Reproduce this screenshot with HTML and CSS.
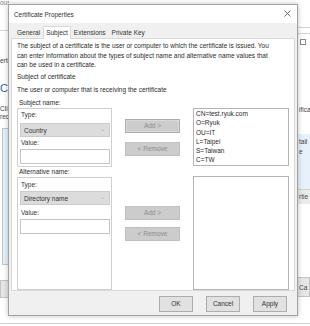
FILE: index.html
```html
<!DOCTYPE html>
<html lang="en">
<head>
    <meta charset="UTF-8">
    <title>Certificate Properties</title>
    <link rel="stylesheet" href="styles.css">
</head>
<body>
    <div class="desk">
        <div class="back">
            <div class="back_row">
                <div class="strip strip_left">
                    <span class="bt bt_ous">ous</span>
                    <div class="bline bline_a"></div>
                    <span class="bt bt_ertif">ertif</span>
                    <span class="bt_head">Ce</span>
                    <span class="bt bt_cli">Cli</span>
                    <span class="bt">rec</span>
                    <div class="blist"></div>
                    <div class="bbtn"></div>
                </div>
                <div class="strip strip_right">
                    <div class="bline bline_r1"></div>
                    <div class="bline bline_r2"></div>
                    <div class="bcheck"></div>
                    <span class="bt bt_ificat">ificat</span>
                    <div class="bsel">
                        <span class="bt">tail</span>
                        <span class="bt">e</span>
                    </div>
                    <div class="bbar"><span class="bt">rtie</span></div>
                    <div class="bbtn bbtn_r"><span class="bt">Ca</span></div>
                </div>
            </div>
            <div class="back_foot"></div>
        </div>

        <div class="dialog">
            <div class="titlebar">
                <span class="title">Certificate Properties</span>
                <svg class="close" width="7" height="7" viewBox="0 0 7 7">
                    <path d="M0.5 0.5 L6.5 6.5 M6.5 0.5 L0.5 6.5" stroke="#444" stroke-width="0.8" fill="none"/>
                </svg>
            </div>

            <div class="tabs">
                <span class="tab">General</span>
                <span class="tab tab_on">Subject</span>
                <span class="tab">Extensions</span>
                <span class="tab">Private Key</span>
            </div>

            <div class="page">
                <p class="desc">The subject of a certificate is the user or computer to which the certificate is issued. You<br>can enter information about the types of subject name and alternative name values that<br>can be used in a certificate.</p>
                <p class="head">Subject of certificate</p>
                <p class="sub">The user or computer that is receiving the certificate</p>

                <div class="section section_subject">
                    <div class="group">
                        <span class="glabel">Subject name:</span>
                        <div class="gbox">
                            <span class="flabel">Type:</span>
                            <div class="combo">Country<span class="chev">&#8964;</span></div>
                            <span class="flabel">Value:</span>
                            <div class="input"></div>
                        </div>
                    </div>
                    <div class="mid">
                        <span class="mbtn mbtn_add">Add &gt;</span>
                        <span class="mbtn">&lt; Remove</span>
                    </div>
                    <div class="vlist">
                        <span>CN=test.ryuk.com</span>
                        <span>O=Ryuk</span>
                        <span>OU=IT</span>
                        <span>L=Taipei</span>
                        <span>S=Taiwan</span>
                        <span>C=TW</span>
                    </div>
                </div>

                <div class="section section_alt">
                    <div class="group">
                        <span class="glabel">Alternative name:</span>
                        <div class="gbox">
                            <span class="flabel">Type:</span>
                            <div class="combo">Directory name<span class="chev">&#8964;</span></div>
                            <span class="flabel">Value:</span>
                            <div class="input"></div>
                        </div>
                    </div>
                    <div class="mid">
                        <span class="mbtn">Add &gt;</span>
                        <span class="mbtn">&lt; Remove</span>
                    </div>
                    <div class="vlist"></div>
                </div>
            </div>

            <div class="footer">
                <span class="fbtn">OK</span>
                <span class="fbtn">Cancel</span>
                <span class="fbtn">Apply</span>
            </div>
        </div>
    </div>
</body>
</html>
```
FILE: styles.css
```css
* {
    margin: 0;
    padding: 0;
    box-sizing: border-box;
}

body {
    background-color: #fff;
    font-family: "Liberation Sans", Arial, sans-serif;
    font-size: 6.5px;
    color: #333;
}

.desk {
    position: relative;
    width: 310px;
    height: 326px;
    overflow: hidden;
    background-color: #fff;
}

/* window behind the dialog */
.back { display: flex; flex-direction: column; }
.back_row { height: 323px; display: flex; justify-content: space-between; }
.back_foot { border-top: 1px solid #cfcfcf; height: 3px; }

.strip { display: flex; flex-direction: column; overflow: hidden; white-space: nowrap; }
.strip_left { width: 9px; }
.strip_right { width: 12px; }

.bt { display: block; line-height: 8px; height: 8px; color: #444; }
.bt_ous { margin-top: -1px; color: #777; }
.bline { height: 1px; background-color: #d4d4d4; }
.bline_a { margin-top: 23px; }
.bt_ertif { margin-top: 26px; }
.bt_head { margin-top: 17px; font-size: 11px; line-height: 12px; height: 12px; color: #2a64a8; }
.bt_cli { margin-top: 11px; }

.blist {
    margin: 7px 0 0 2px;
    height: 137px;
    border: 1px solid #b9c7d6;
    border-right: none;
    background-color: #e8f1fa;
}

.bbtn {
    margin-top: 15px;
    height: 18px;
    background-color: #e6e6e6;
    border: 1px solid #c4c4c4;
    border-right: none;
}

.strip_right .bline_r1 { margin-top: 27px; }
.strip_right .bline_r2 { margin-top: 5px; }
.bcheck {
    margin: 5px 0 0 2px;
    width: 6px;
    height: 6px;
    border: 1px solid #888;
}
.bt_ificat { margin-top: 61px; padding-left: 1px; }
.bsel {
    margin-top: 20px;
    height: 55px;
    background-color: #e6f1fb;
    padding: 3px 0 0 1px;
}
.bsel .bt { line-height: 10px; height: 10px; }
.bbar {
    height: 15px;
    background-color: #ebebeb;
    border-top: 1px solid #d0d0d0;
    padding: 3px 0 0 1px;
}
.bbtn_r { margin-top: 73px; height: 20px; border-left: none; border-right: 1px solid #c4c4c4; padding: 6px 0 0 1px; }

/* dialog */
.dialog {
    position: absolute;
    left: 8px;
    top: 4px;
    width: 290px;
    height: 312px;
    display: flex;
    flex-direction: column;
    background-color: #f0f0f0;
    border: 1px solid #a2a2a2;
    box-shadow: 0 0 5px rgba(0, 0, 0, 0.25);
}

.titlebar {
    height: 18px;
    display: flex;
    align-items: center;
    justify-content: space-between;
    padding: 0 6px 0 5px;
    background-color: #fff;
}

.title { font-size: 6.4px; color: #333; }
.close { margin-top: -1px; }

.tabs {
    height: 15px;
    display: flex;
    align-items: flex-end;
    padding-left: 5px;
    position: relative;
    z-index: 1;
}

.tab {
    height: 10px;
    line-height: 10px;
    padding: 0 3px;
    color: #333;
}

.tab_on {
    height: 13px;
    line-height: 11px;
    margin-bottom: -1px;
    background-color: #fff;
    border: 1px solid #d9d9d9;
    border-bottom: none;
    padding: 0 2px;
}

.page {
    flex: 1;
    margin: 0 2px;
    background-color: #fff;
    border: 1px solid #d9d9d9;
    padding: 2px 0 0 5px;
}

.desc { line-height: 9.5px; white-space: nowrap; color: #2a2a2a; }
.head { margin-top: 2.5px; line-height: 9.5px; color: #2a2a2a; }
.sub { margin-top: 3.5px; line-height: 9.5px; color: #2a2a2a; }

.section {
    display: grid;
    grid-template-columns: 95px 55px 96px;
    column-gap: 13px;
}
.section_subject { margin-top: 3.5px; }

.group { display: flex; flex-direction: column; }
.glabel { line-height: 10px; height: 10px; padding-left: 2px; color: #2a2a2a; }

.gbox {
    display: flex;
    flex-direction: column;
    border: 1px solid #cfcfcf;
    padding: 1px 1px 2px 2px;
}
.section_alt .gbox { height: 113px; padding-top: 2px; }

.flabel { line-height: 10px; height: 10px; padding-left: 1px; color: #333; }

.combo {
    height: 14px;
    margin: 3px 0 1px;
    display: flex;
    align-items: center;
    justify-content: space-between;
    padding: 0 4px 0 3px;
    background-color: #dcdcdc;
    border: 1px solid #cbcbcb;
    color: #333;
}
.section_alt .combo { margin: 1px 0 3px; }

.chev { font-size: 6px; color: #a8a8a8; margin-top: -4px; }

.input {
    height: 15px;
    margin-top: 1px;
    border: 1px solid #c4c4c4;
    background-color: #fff;
}

.mid { display: flex; flex-direction: column; gap: 9px; padding-top: 21px; }
.section_alt .mid { padding-top: 39px; gap: 7px; }

.mbtn {
    height: 14px;
    line-height: 12px;
    text-align: center;
    background-color: #cccccc;
    border: 1px solid #bfbfbf;
    color: #8c8c8c;
}
.mbtn_add { border-color: #adadad; box-shadow: inset 0 0 0 1px #d9d9d9; }

.vlist {
    margin-top: 10px;
    display: flex;
    flex-direction: column;
    border: 1px solid #b4b4b4;
    padding: 0 0 0 2px;
    line-height: 9.3px;
    color: #2a2a2a;
}
.section_subject .vlist { height: 58px; }
.section_alt .vlist { margin-top: 9px; height: 114px; }

.footer {
    height: 24px;
    display: flex;
    justify-content: flex-end;
    align-items: flex-start;
    gap: 13px;
    padding: 5px 10px 0 0;
}

.fbtn {
    width: 34px;
    height: 16px;
    line-height: 14px;
    text-align: center;
    background-color: #e1e1e1;
    border: 1px solid #adadad;
    color: #333;
}
```
